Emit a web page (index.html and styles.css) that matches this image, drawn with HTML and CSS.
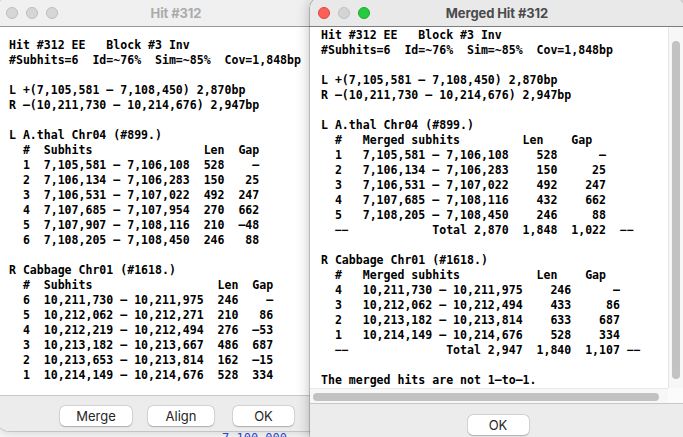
FILE: index.html
```html
<!DOCTYPE html>
<html>
<head>
<meta charset="utf-8">
<title>Merged Hit #312</title>
<link rel="stylesheet" href="styles.css">
</head>
<body>
<div class="desk-text">7,100,000</div>

<div class="window win-left">
  <div class="titlebar">
    <div class="lights">
      <span class="light light-off"></span>
      <span class="light light-off"></span>
      <span class="light light-off"></span>
    </div>
    <div class="title">Hit #312</div>
    <div></div>
  </div>
  <div class="content content-left"><pre class="mono">Hit #312 EE   Block #3 Inv
#Subhits=6  Id=~76%  Sim=~85%  Cov=1,848bp

L +(7,105,581 – 7,108,450) 2,870bp
R –(10,211,730 – 10,214,676) 2,947bp

L A.thal Chr04 (#899.)
  #  Subhits                Len  Gap
  1  7,105,581 – 7,106,108  528    –
  2  7,106,134 – 7,106,283  150   25
  3  7,106,531 – 7,107,022  492  247
  4  7,107,685 – 7,107,954  270  662
  5  7,107,907 – 7,108,116  210  –48
  6  7,108,205 – 7,108,450  246   88

R Cabbage Chr01 (#1618.)
  #  Subhits                  Len  Gap
  6  10,211,730 – 10,211,975  246    –
  5  10,212,062 – 10,212,271  210   86
  4  10,212,219 – 10,212,494  276  –53
  3  10,213,182 – 10,213,667  486  687
  2  10,213,653 – 10,213,814  162  –15
  1  10,214,149 – 10,214,676  528  334</pre></div>
  <div class="footer footer-left">
    <div class="btn btn-merge">Merge</div>
    <div class="btn btn-align">Align</div>
    <div class="btn btn-ok">OK</div>
  </div>
</div>

<div class="window win-right">
  <div class="titlebar titlebar-active">
    <div class="lights">
      <span class="light light-red"></span>
      <span class="light light-gray"></span>
      <span class="light light-green"></span>
    </div>
    <div class="title title-active">Merged Hit #312</div>
    <div></div>
  </div>
  <div class="body-row">
    <div class="content content-right"><pre class="mono">Hit #312 EE   Block #3 Inv
#Subhits=6  Id=~76%  Sim=~85%  Cov=1,848bp

L +(7,105,581 – 7,108,450) 2,870bp
R –(10,211,730 – 10,214,676) 2,947bp

L A.thal Chr04 (#899.)
  #   Merged subhits         Len    Gap
  1   7,105,581 – 7,106,108    528      –
  2   7,106,134 – 7,106,283    150     25
  3   7,106,531 – 7,107,022    492    247
  4   7,107,685 – 7,108,116    432    662
  5   7,108,205 – 7,108,450    246     88
  −−            Total 2,870  1,848  1,022  −−

R Cabbage Chr01 (#1618.)
  #   Merged subhits           Len    Gap
  4   10,211,730 – 10,211,975    246      –
  3   10,212,062 – 10,212,494    433     86
  2   10,213,182 – 10,213,814    633    687
  1   10,214,149 – 10,214,676    528    334
  −−              Total 2,947  1,840  1,107 −−

The merged hits are not 1–to–1.</pre></div>
    <div class="vscroll"><div class="vthumb"></div></div>
  </div>
  <div class="hscroll-row">
    <div class="hscroll"><div class="hthumb"></div></div>
    <div class="corner"></div>
  </div>
  <div class="footer footer-right">
    <div class="btn btn-ok">OK</div>
  </div>
</div>
</body>
</html>
```

FILE: styles.css
```css
html, body {
  margin: 0;
  padding: 0;
  width: 683px;
  height: 437px;
  overflow: hidden;
}

body {
  position: relative;
  background: #f7f7f7;
  font-family: Inter, "Liberation Sans", sans-serif;
}

.desk-text {
  position: absolute;
  left: 222px;
  top: 431px;
  font-family: "DejaVu Sans Mono", monospace;
  font-size: 12px;
  line-height: 14px;
  color: #2f48d4;
}

.window {
  position: absolute;
  top: -2px;
  background: #ffffff;
  border-radius: 10px;
  overflow: hidden;
  display: flex;
  flex-direction: column;
}

.win-left {
  left: -2px;
  width: 356px;
  height: 433px;
  box-shadow: 0 0 0 0.5px rgba(0, 0, 0, 0.25), 0 3px 10px rgba(0, 0, 0, 0.12);
}

.win-right {
  left: 310px;
  width: 374px;
  height: 446px;
  box-shadow: 0 0 0 0.5px rgba(0, 0, 0, 0.35), 0 0 14px rgba(0, 0, 0, 0.28);
}

/* title bar */
.titlebar {
  flex: none;
  height: 29px;
  box-sizing: border-box;
  padding-top: 2px;
  border-bottom: 1px solid #9a9a9a;
  background: #f0f0f0;
  display: grid;
  grid-template-columns: 1fr auto 1fr;
  align-items: center;
}

.titlebar-active {
  background: #e9e9e9;
  border-bottom-color: #7c7c7c;
}

.lights {
  display: flex;
  gap: 8px;
  padding-left: 8px;
}

.light {
  width: 12px;
  height: 12px;
  border-radius: 50%;
  box-sizing: border-box;
}

.light-off {
  background: #d6d6d6;
  border: 0.5px solid #bdbdbd;
}

.light-red {
  background: #fe5f57;
  border: 0.5px solid #e0443e;
}

.light-gray {
  background: #d4d4d4;
  border: 0.5px solid #c0c0c0;
}

.light-green {
  background: #28c840;
  border: 0.5px solid #1aab29;
}

.title {
  font-size: 13px;
  font-weight: 700;
  color: #ababab;
  letter-spacing: -0.1px;
}

.title-active {
  color: #4b4b4b;
}

/* text content */
.mono {
  margin: 0;
  font-family: "DejaVu Sans Mono", "Liberation Mono", monospace;
  font-weight: 700;
  font-size: 11.55px;
  line-height: 15px;
  color: #000;
}

.content {
  flex: 1;
  overflow: hidden;
  background: #fff;
}

.content-left {
  padding: 11px 0 0 11px;
}

.body-row {
  flex: none;
  height: 361px;
  display: flex;
}

.content-right {
  padding: 1px 0 0 11px;
}

.vscroll {
  flex: none;
  width: 16px;
  box-sizing: border-box;
  background: #f7f7f7;
  border-left: 1px solid #e6e6e6;
  padding: 14px 0 9px 3px;
  display: flex;
}

.vthumb {
  width: 8px;
  flex: none;
  border-radius: 4px;
  background: #c2c2c2;
}

.hscroll-row {
  flex: none;
  height: 15px;
  display: flex;
}

.hscroll {
  flex: 1;
  box-sizing: border-box;
  background: #f7f7f7;
  border-top: 1px solid #e9e9e9;
  padding: 4px 9px 0 3px;
}

.hthumb {
  height: 8px;
  border-radius: 4px;
  background: #c2c2c2;
}

.corner {
  flex: none;
  width: 16px;
  background: #fbfbfb;
}

/* footer */
.footer {
  flex: none;
  box-sizing: border-box;
  background: #ececec;
  border-top: 1px solid #c8c8c8;
  display: flex;
  align-items: flex-start;
}

.footer-left {
  height: 36px;
  padding: 10px 0 0 62px;
  gap: 16px;
}

.footer-left .btn-ok {
  margin-left: 3px;
}

.footer-right {
  flex: 1;
  padding-top: 11px;
  justify-content: center;
}

.btn {
  height: 20px;
  box-sizing: border-box;
  border-radius: 5px;
  background: #ffffff;
  box-shadow: 0 0 0 0.5px rgba(0, 0, 0, 0.14), 0 0.5px 1.5px rgba(0, 0, 0, 0.22);
  font-size: 13px;
  line-height: 20px;
  color: #262626;
  text-align: center;
}

.btn-merge {
  width: 72px;
}

.btn-align {
  width: 66px;
}

.btn-ok {
  width: 61px;
}

.footer-right .btn-ok {
  margin-left: 2px;
}
```
